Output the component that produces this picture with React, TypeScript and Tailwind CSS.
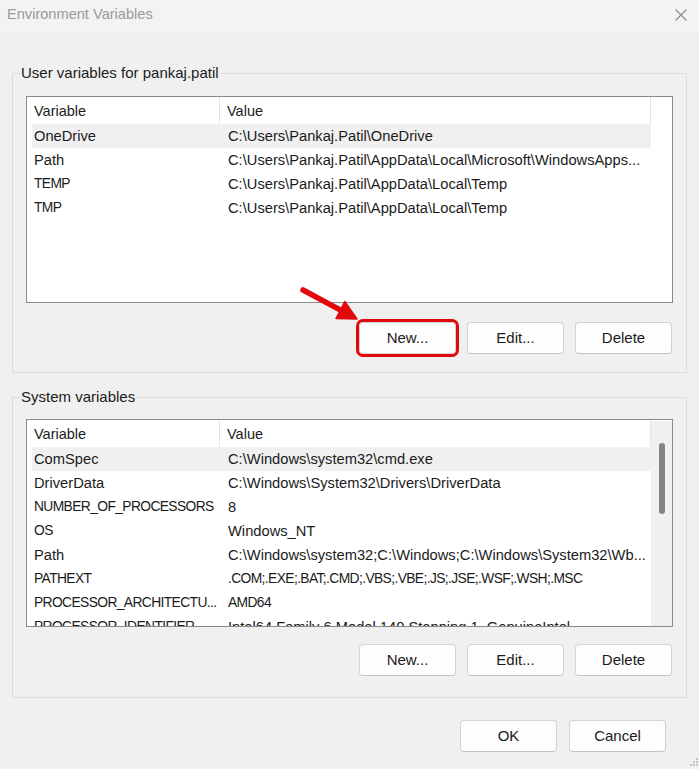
import React from "react";

type Row = { name: string; value: string; capsName?: boolean; capsValue?: boolean };

const userRows: Row[] = [
	{ name: "OneDrive", value: "C:\\Users\\Pankaj.Patil\\OneDrive" },
	{ name: "Path", value: "C:\\Users\\Pankaj.Patil\\AppData\\Local\\Microsoft\\WindowsApps..." },
	{ name: "TEMP", value: "C:\\Users\\Pankaj.Patil\\AppData\\Local\\Temp", capsName: true },
	{ name: "TMP", value: "C:\\Users\\Pankaj.Patil\\AppData\\Local\\Temp", capsName: true },
];

const systemRows: Row[] = [
	{ name: "ComSpec", value: "C:\\Windows\\system32\\cmd.exe" },
	{ name: "DriverData", value: "C:\\Windows\\System32\\Drivers\\DriverData" },
	{ name: "NUMBER_OF_PROCESSORS", value: "8", capsName: true },
	{ name: "OS", value: "Windows_NT", capsName: true },
	{ name: "Path", value: "C:\\Windows\\system32;C:\\Windows;C:\\Windows\\System32\\Wb..." },
	{ name: "PATHEXT", value: ".COM;.EXE;.BAT;.CMD;.VBS;.VBE;.JS;.JSE;.WSF;.WSH;.MSC", capsName: true, capsValue: true },
	{ name: "PROCESSOR_ARCHITECTU...", value: "AMD64", capsName: true, capsValue: true },
	{ name: "PROCESSOR_IDENTIFIER", value: "Intel64 Family 6 Model 140 Stepping 1, GenuineIntel", capsName: true },
];

function Button({ label, highlight }: { label: string; highlight?: boolean }) {
	return (
		<button
			type="button"
			className={
				highlight
					? "w-[97px] h-[32px] rounded-[4px] bg-[#fdfdfd] border border-[#d3d3d3] text-[15px] text-[#1b1b1b] outline-[3px] outline-solid outline-[#e3080b] outline-offset-0"
					: "w-[97px] h-[32px] rounded-[4px] bg-[#fdfdfd] border border-[#d3d3d3] border-b-[#c4c4c4] text-[15px] text-[#1b1b1b]"
			}
		>
			{label}
		</button>
	);
}

function VarList({ rows, scroll, height }: { rows: Row[]; scroll?: boolean; height: string }) {
	return (
		<div className={`${height} border border-[#8a8a8a] bg-white flex overflow-hidden`}>
			<div className="flex-1 pl-[5px] text-[#1b1b1b]">
				<div className="h-[27px] flex text-[14.5px]">
					<div className="w-[188px] pl-[2px] pt-[2px] flex items-center border-r border-[#e5e5e5]">Variable</div>
					<div className="flex-1 pl-[7px] pt-[2px] flex items-center border-r border-[#e5e5e5]">Value</div>
				</div>
				{rows.map((r, i) => (
					<div key={r.name + i} className={i === 0 ? "h-[24px] flex items-center bg-[#f0f0f0]" : "h-[24px] flex items-center"}>
						<div
							className={
								r.capsName
									? "w-[188px] pl-[2px] whitespace-nowrap text-[13.8px] tracking-[-0.6px]"
									: "w-[188px] pl-[2px] whitespace-nowrap text-[14.7px]"
							}
						>
							{r.name}
						</div>
						<div
							className={
								r.capsValue
									? "flex-1 pl-[8px] whitespace-nowrap overflow-hidden text-[13.8px] tracking-[-0.6px]"
									: "flex-1 pl-[8px] whitespace-nowrap overflow-hidden text-[14.7px]"
							}
						>
							{r.value}
						</div>
					</div>
				))}
			</div>
			{scroll ? (
				<div className="w-[21px] mt-[1px] bg-[#f0f0f0] pl-[8px] pt-[22px]">
					<div className="w-[6px] h-[71px] rounded-full bg-[#858585]" />
				</div>
			) : (
				<div className="w-[21px]" />
			)}
		</div>
	);
}

export default function App() {
	return (
		<div className="relative w-[699px] h-[769px] bg-[#f0f0f0] overflow-hidden font-['Liberation_Sans',Arial,sans-serif]">
			<div className="h-[32px] bg-[#f3f3f3] flex items-center justify-between pl-[7px] pr-[12px] pb-[2px]">
				<span className="text-[14.6px] text-[#9a9a9a]">Environment Variables</span>
				<svg width="12" height="12" viewBox="0 0 12 12" className="text-[#8c8c8c]">
					<path d="M0.5 0.5L11.5 11.5M11.5 0.5L0.5 11.5" stroke="currentColor" strokeWidth="1.1" />
				</svg>
			</div>

			<fieldset className="mt-[31px] mx-[12px] w-[675px] border border-[#dcdcdc] px-[13px] pb-[18px]">
				<legend className="ml-[-6px] px-[1px] text-[15px] leading-[20px] text-[#1b1b1b]">User variables for pankaj.patil</legend>
				<div className="mt-[13px]">
					<VarList rows={userRows} height="h-[207px]" />
				</div>
				<div className="mt-[19px] flex justify-end gap-[11px] pr-[1px]">
					<Button label="New..." highlight />
					<Button label="Edit..." />
					<Button label="Delete" />
				</div>
			</fieldset>

			<fieldset className="mt-[14px] mx-[12px] w-[675px] border border-[#dcdcdc] px-[13px] pb-[21px]">
				<legend className="ml-[-6px] px-[1px] text-[15px] leading-[20px] text-[#1b1b1b]">System variables</legend>
				<div className="mt-[12px]">
					<VarList rows={systemRows} scroll height="h-[208px]" />
				</div>
				<div className="mt-[17px] flex justify-end gap-[11px] pr-[1px]">
					<Button label="New..." />
					<Button label="Edit..." />
					<Button label="Delete" />
				</div>
			</fieldset>

			<div className="mt-[22px] flex justify-end gap-[12px] pr-[33px]">
				<Button label="OK" />
				<Button label="Cancel" />
			</div>

			{/* annotation arrow */}
			<svg className="absolute left-[295px] top-[282px] pointer-events-none" width="70" height="45" viewBox="0 0 70 45">
				<line x1="8" y1="8" x2="46" y2="28.4" stroke="#e3080b" strokeWidth="5.5" strokeLinecap="round" />
				<polygon points="62,37 41,36.5 49.8,19.5" fill="#e3080b" stroke="#e3080b" strokeWidth="1.5" strokeLinejoin="round" />
			</svg>

			{/* resize grip */}
			<svg className="absolute right-[1px] bottom-[1px]" width="10" height="10" viewBox="0 0 10 10">
				<rect x="8" y="0" width="2" height="2" fill="#c4c4c4" />
				<rect x="5" y="3" width="2" height="2" fill="#c4c4c4" />
				<rect x="8" y="3" width="2" height="2" fill="#c4c4c4" />
				<rect x="2" y="6" width="2" height="2" fill="#c4c4c4" />
				<rect x="5" y="6" width="2" height="2" fill="#c4c4c4" />
				<rect x="8" y="6" width="2" height="2" fill="#c4c4c4" />
			</svg>
		</div>
	);
}
